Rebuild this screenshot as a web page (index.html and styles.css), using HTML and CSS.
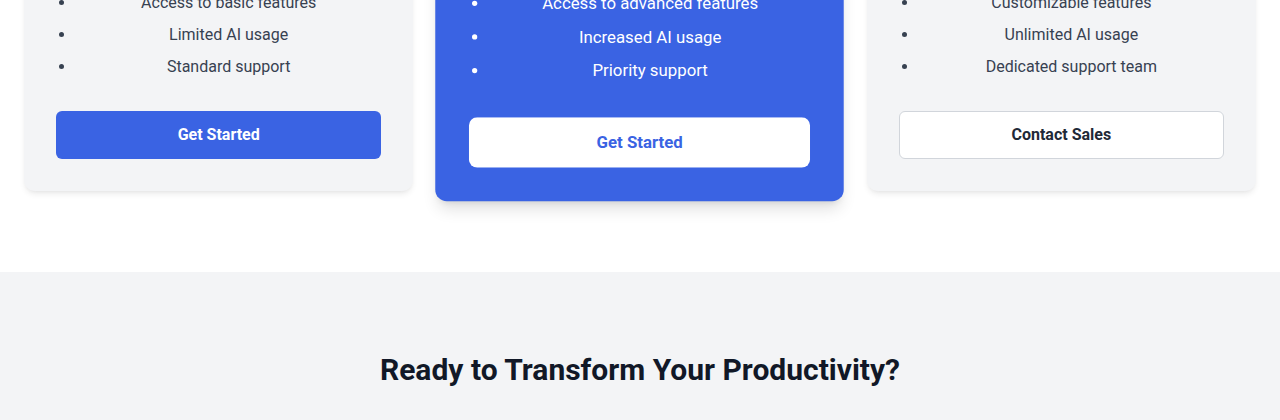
FILE: index.html
```html
<!DOCTYPE html>
<html lang="en">
<head>
<meta charset="utf-8">
<title>Pricing</title>
<link rel="stylesheet" href="styles.css">
</head>
<body>
<main>
  <section class="pricing">
    <div class="plans">
      <div class="plan">
        <h3 class="plan-name">Basic</h3>
        <p class="plan-price">$9/mo</p>
        <p class="plan-desc">For individuals getting started</p>
        <ul class="features">
          <li>Up to 3 projects</li>
          <li>Access to basic features</li>
          <li>Limited AI usage</li>
          <li>Standard support</li>
        </ul>
        <a class="btn btn-primary" href="#">Get Started</a>
      </div>
      <div class="plan plan-featured">
        <h3 class="plan-name">Pro</h3>
        <p class="plan-price">$29/mo</p>
        <p class="plan-desc">For professionals and small teams</p>
        <ul class="features">
          <li>Unlimited projects</li>
          <li>Access to advanced features</li>
          <li>Increased AI usage</li>
          <li>Priority support</li>
        </ul>
        <a class="btn btn-white" href="#">Get Started</a>
      </div>
      <div class="plan">
        <h3 class="plan-name">Enterprise</h3>
        <p class="plan-price">Custom</p>
        <p class="plan-desc">For large organizations</p>
        <ul class="features">
          <li>Unlimited everything</li>
          <li>Customizable features</li>
          <li>Unlimited AI usage</li>
          <li>Dedicated support team</li>
        </ul>
        <a class="btn btn-outline" href="#">Contact Sales</a>
      </div>
    </div>
  </section>
  <section class="cta">
    <h2 class="cta-title">Ready to Transform Your Productivity?</h2>
  </section>
</main>
</body>
</html>
```
FILE: styles.css
```css
* { box-sizing: border-box; }
html, body { margin: 0; padding: 0; }
body {
  font-family: Roboto, "Liberation Sans", sans-serif;
  color: #111827;
  background: #ffffff;
}
.pricing {
  margin-top: -219px;
  padding: 0 24px 81px;
}
.plans {
  display: grid;
  grid-template-columns: repeat(3, 1fr);
  gap: 32px;
}
.plan {
  background: #f3f4f6;
  border-radius: 11px;
  padding: 32px;
  box-shadow: 0 4px 6px -1px rgba(0,0,0,0.08), 0 2px 4px -2px rgba(0,0,0,0.06);
  text-align: center;
  display: flex;
  flex-direction: column;
}
.plan-featured {
  background: #3a63e3;
  color: #ffffff;
  transform: scale(1.05);
  box-shadow: 0 10px 15px -3px rgba(0,0,0,0.12), 0 4px 6px -4px rgba(0,0,0,0.1);
}
.plan-name {
  margin: 0 0 16px;
  font-size: 24px;
  line-height: 32px;
  font-weight: 700;
}
.plan-price {
  margin: 0 0 16px;
  font-size: 36px;
  line-height: 40px;
  font-weight: 700;
}
.plan-desc {
  margin: 0 0 18px;
  font-size: 16px;
  line-height: 24px;
}
.features {
  list-style: disc;
  margin: 0 0 32px;
  padding: 0 0 0 20px;
  color: #374151;
  font-size: 16px;
  line-height: 24px;
}
.features li + li { margin-top: 8px; }
.plan-featured .features { color: #ffffff; }
.btn {
  display: block;
  margin-top: auto;
  height: 48px;
  line-height: 46px;
  border-radius: 6px;
  font-size: 16px;
  font-weight: 700;
  text-decoration: none;
  text-align: center;
  border: 1px solid transparent;
}
.btn-primary { background: #3a63e3; color: #ffffff; }
.btn-white { background: #ffffff; color: #3a63e3; border-radius: 8px; }
.btn-outline { background: #ffffff; color: #1f2937; border-color: #d1d5db; }
.cta {
  background: #f3f4f6;
  padding: 80px 24px;
  text-align: center;
}
.cta-title {
  margin: 0;
  font-size: 30px;
  line-height: 36px;
  font-weight: 700;
  color: #111827;
}
```
